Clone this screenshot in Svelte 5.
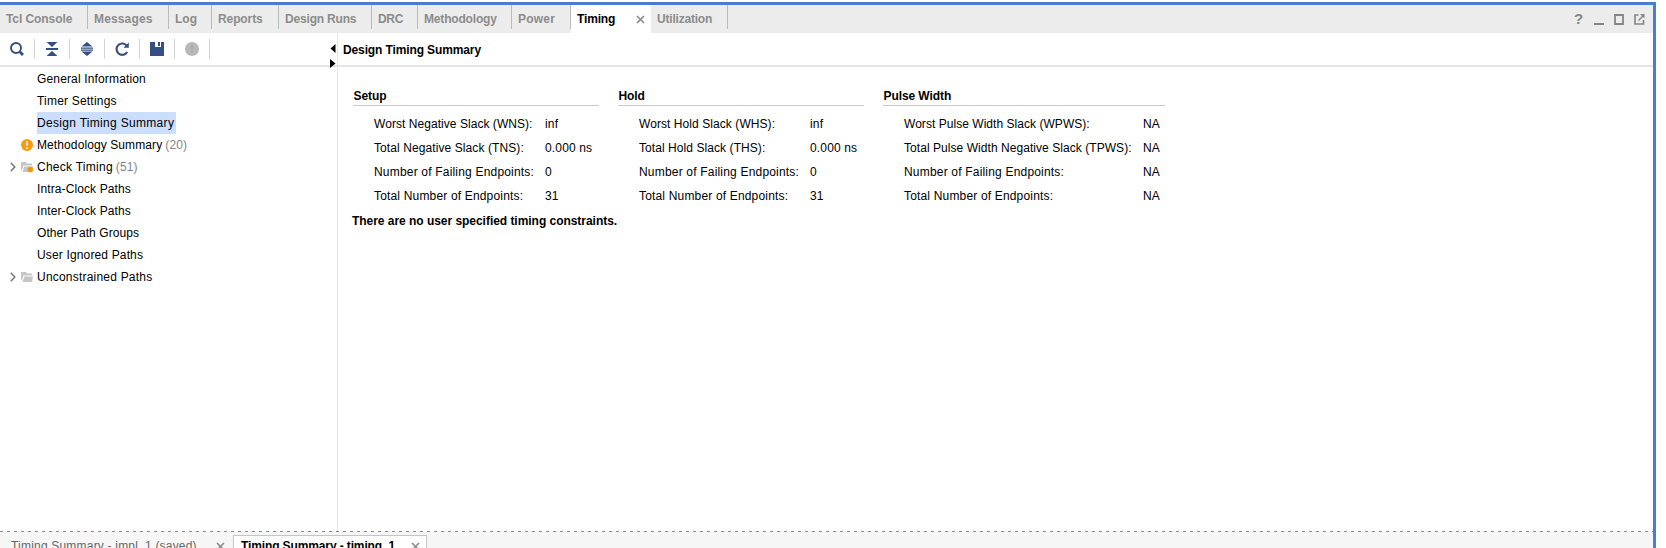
<script>
  // `ls` is the letter spacing of a text in px
  const tabs = [
    { label: 'Tcl Console', width: 88, ls: -0.08 },
    { label: 'Messages', width: 81, ls: 0.15 },
    { label: 'Log', width: 43, ls: 0 },
    { label: 'Reports', width: 67, ls: -0.1 },
    { label: 'Design Runs', width: 93, ls: -0.18 },
    { label: 'DRC', width: 46, ls: -0.3 },
    { label: 'Methodology', width: 94, ls: -0.18 },
    { label: 'Power', width: 59, ls: 0.2 },
    { label: 'Timing', width: 80, active: true, ls: -0.15 },
    { label: 'Utilization', width: 77, ls: -0.2 }
  ];
  const tree = [
    { label: 'General Information', ls: 0.15 },
    { label: 'Timer Settings', ls: 0.2 },
    { label: 'Design Timing Summary', selected: true, ls: 0.31 },
    { label: 'Methodology Summary', count: 20, icon: 'warn', ls: 0.1 },
    { label: 'Check Timing', count: 51, icon: 'folder', dot: true, ls: 0.26 },
    { label: 'Intra-Clock Paths', ls: 0.11 },
    { label: 'Inter-Clock Paths', ls: 0.11 },
    { label: 'Other Path Groups', ls: 0.08 },
    { label: 'User Ignored Paths', ls: 0.15 },
    { label: 'Unconstrained Paths', icon: 'folder', ls: 0.21 }
  ];
  const failing = 'Number of Failing Endpoints:';
  const total = 'Total Number of Endpoints:';
  const groups = [
    { title: 'Setup', width: 246, labelWidth: 171, rows: [
      ['Worst Negative Slack (WNS):', 'inf', 0.05], ['Total Negative Slack (TNS):', '0.000 ns', 0.09],
      [failing, '0', 0.19], [total, '31', 0.17]] },
    { title: 'Hold', width: 246, labelWidth: 171, rows: [
      ['Worst Hold Slack (WHS):', 'inf', 0.07], ['Total Hold Slack (THS):', '0.000 ns', 0.07],
      [failing, '0', 0.19], [total, '31', 0.17]] },
    { title: 'Pulse Width', width: 282, labelWidth: 239, rows: [
      ['Worst Pulse Width Slack (WPWS):', 'NA', 0.04], ['Total Pulse Width Negative Slack (TPWS):', 'NA', 0.055],
      [failing, 'NA', 0.19], [total, 'NA', 0.17]] }
  ];
  const tools = ['search', 'collapse', 'expand', 'refresh', 'save', 'info'];
</script>

{#snippet close()}
  <svg class="close" width="9" height="9" viewBox="0 0 9 9"><path d="M1 1 8 8M8 1 1 8" /></svg>
{/snippet}

<div class="window">
  <header class="tabs">
    {#each tabs as t}
      <div class="tab" class:active={t.active} style:width="{t.width}px">
        <span style:letter-spacing="{t.ls}px">{t.label}</span>
        {#if t.active}{@render close()}{/if}
      </div>
    {/each}
    <div class="controls">
      <span class="help">?</span>
      <svg width="51" height="12" viewBox="0 0 51 12" fill="none" stroke="#858585">
        <path d="M0 10h10" stroke-width="2" />
        <path d="M21 1h8v9h-8z" stroke-width="1.8" />
        <path d="M44.500 1H41v9h8.500V6" stroke-width="1.600" />
        <path d="M44.500 6.500 49 2" stroke-width="1.500" />
        <path d="M46 0h4.500v4.500z" fill="#858585" stroke="none" />
      </svg>
    </div>
  </header>

  <main>
    <aside>
      <div class="toolbar">
        {#each tools as tool}
          <div class="tool">
            <svg width="16" height="16" viewBox="0 0 16 16">
              {#if tool === 'search'}
                <circle cx="7" cy="7" r="5" fill="none" stroke="#344f83" stroke-width="1.9" />
                <path d="m10.8 10.8 3.200 3.200" stroke="#344f83" stroke-width="2.8" />
              {:else if tool === 'collapse'}
                <path d="M2.500 1h11L8 6zM2.500 15h11L8 10zM2 7h12v2H2z" fill="#344f83" />
              {:else if tool === 'expand'}
                <path d="M2.500 5.500h11L8 1zM2.500 10.500h11L8 15zM2 6.500h12v1.200H2zM2 8.500h12v1.200H2z" fill="#344f83" />
              {:else if tool === 'refresh'}
                <path d="M13 5A5.700 5.700 0 1 0 13.200 11" fill="none" stroke="#344f83" stroke-width="2.100" />
                <path d="M14.800 1.500v5.300H9.500z" fill="#344f83" />
              {:else if tool === 'save'}
                <path fill-rule="evenodd" d="M1 1h14v14H1zM6 1v5h6V1zM9 1h2v4H9z" fill="#344f83" />
              {:else}
                <circle cx="8" cy="8" r="7" fill="#b9b9b9" />
                <path d="M8 4v5M8 10.500v1.500" stroke="#a8a8a8" stroke-width="1.600" />
              {/if}
            </svg>
          </div>
        {/each}
        <svg class="arrows" width="6" height="24" viewBox="0 0 6 24"><path d="M5.500 0v9L.5 4.500zM0 15v9l5.500-4.500z" /></svg>
      </div>
      <div class="tree">
        {#each tree as n}
          <div class="node">
            <span class="twist">
              {#if n.icon === 'folder'}
                <svg width="6" height="10" viewBox="0 0 6 10"><path d="m.8.8 4 4.200-4 4.200" /></svg>
              {/if}
            </span>
            <span class="icon">
              {#if n.icon === 'warn'}
                <svg width="12" height="12" viewBox="0 0 12 12"><circle cx="6" cy="6" r="6" fill="#fb9a10" /><path d="M6 2.500v4M6 8v1.700" stroke="#fff" stroke-width="1.700" /></svg>
              {:else if n.icon === 'folder'}
                <svg width="12" height="12" viewBox="0 0 12 12">
                  <path d="M0 1h5l1 1.500h5V4.500H2.500L1 9H0z" fill="#c6c6c6" /><path d="M3.200 5.500H12L11 11H1.500z" fill="#c6c6c6" />
                  {#if n.dot}<circle cx="9.300" cy="8.500" r="2.800" fill="#f5960f" />{/if}
                </svg>
              {/if}
            </span>
            <span class="label" class:selected={n.selected} style:letter-spacing="{n.ls}px">{n.label}</span>
            {#if n.count}<span class="count">({n.count})</span>{/if}
          </div>
        {/each}
      </div>
    </aside>

    <section>
      <h1>Design Timing Summary</h1>
      <div class="groups">
        {#each groups as g}
          <div class="group" style:width="{g.width}px">
            <h2>{g.title}</h2>
            {#each g.rows as [k, v, ls]}
              <div class="row">
                <span style:width="{g.labelWidth}px" style:letter-spacing="{ls}px">{k}</span>
                <span class="value">{v}</span>
              </div>
            {/each}
          </div>
        {/each}
      </div>
      <p>There are no user specified timing constraints.</p>
    </section>
  </main>

  <svg class="dashes" width="1653" height="1"><path d="M0 .5h1653" stroke="#858585" stroke-dasharray="3 4" /></svg>
  <footer>
    <div class="doc"><span>Timing Summary - impl_1 (saved)</span>{@render close()}</div>
    <div class="doc current"><span>Timing Summary - timing_1</span>{@render close()}</div>
  </footer>
</div>

<style>
  :global(body) { margin: 0; background: #fff; overflow: hidden; }
  .window {
    box-sizing: border-box; width: 1656px; height: 546px; margin-top: 2px;
    border-top: 3px solid #4a7dce; border-right: 3px solid #4a7dce;
    display: flex; flex-direction: column; overflow: hidden;
    font: 12px/14px "Liberation Sans", Arial, sans-serif; color: #000; white-space: nowrap;
  }
  .tabs { height: 28px; flex: none; display: flex; background: #ececec; font-weight: bold; color: #8b8b8b; }
  .tab { box-sizing: border-box; height: 24px; padding: 7px 0 0 6px; border-right: 1px solid #bababa; }
  .tab.active { height: 28px; background: #fff; color: #000; border: 0; display: flex; justify-content: space-between; padding-right: 6px; }
  .tab.active .close { margin-top: 3px; }
  .close { fill: none; stroke: #8a8a8a; stroke-width: 1.6; flex: none; }
  .controls { margin-left: auto; display: flex; padding: 7px 8px 0 0; }
  .help { width: 20px; font-size: 15px; color: #858585; }
  .controls svg { margin-top: 2px; }
  main { flex: 1; min-height: 0; display: flex; }
  aside { width: 337px; border-right: 1px solid #e5e5e5; }
  .toolbar { height: 32px; display: flex; border-bottom: 2px solid #e5e5e5; position: relative; }
  .tool { box-sizing: border-box; width: 35px; height: 20px; margin-top: 6px; padding: 2px 0 0 9px; border-right: 1px solid #d4d4d4; }
  .tool svg { display: block; }
  .arrows { position: absolute; left: 330px; top: 11px; z-index: 1; }
  .tree { padding-top: 1px; }
  .node { height: 22px; display: flex; align-items: center; }
  .twist { width: 21px; padding-left: 10px; box-sizing: border-box; display: flex; }
  .twist svg { fill: none; stroke: #777; stroke-width: 1.5; }
  .icon { width: 16px; display: flex; }
  .label { height: 22px; line-height: 23px; }
  .selected { background: #cbdefe; padding-right: 2px; }
  .count { color: #858585; margin-left: 3px; line-height: 23px; letter-spacing: 0.1px; }
  section { flex: 1; }
  h1 { margin: 0; height: 32px; border-bottom: 2px solid #e5e5e5; padding-left: 5px; font-size: 12px; line-height: 34px; letter-spacing: -0.12px; }
  .groups { display: flex; gap: 19px; padding: 21px 0 0 15px; }
  h2 { margin: 0 0 6px; height: 17px; line-height: 16px; border-bottom: 1px solid #c9c9c9; padding-left: 0.5px; font-size: 12px; letter-spacing: -0.08px; }
  .row { display: flex; height: 24px; line-height: 24px; padding-left: 21px; }
  .value { letter-spacing: 0.15px; }
  p { margin: 6px 0 0 14px; font-weight: bold; letter-spacing: -0.035px; }
  .dashes { flex: none; display: block; }
  footer { height: 16px; flex: none; display: flex; background: #f6f6f6; color: #666; }
  .doc { box-sizing: border-box; width: 233px; padding: 7px 8px 0 11px; display: flex; justify-content: space-between; letter-spacing: 0.2px; }
  .doc .close { margin-top: 3px; }
  .current { width: 194px; height: 24px; margin-top: 3px; border: 1px solid #c5c5c5; background: #fff; color: #000; font-weight: bold; padding: 3px 6px 0 7px; letter-spacing: -0.12px; }
</style>
